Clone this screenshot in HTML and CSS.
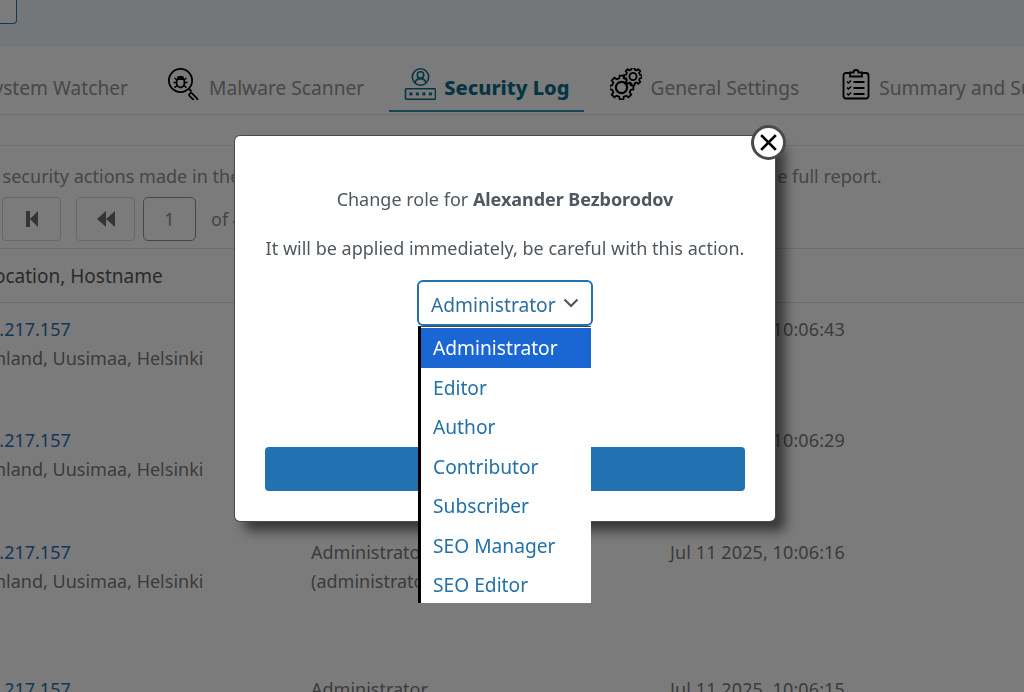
FILE: index.html
```html
<!DOCTYPE html>
<html lang="en">
<head>
<meta charset="utf-8">
<title>Security Log</title>
<link rel="stylesheet" href="styles.css">
</head>
<body>
<div class="page">
  <header class="topband"><span class="topbtn"></span></header>
  <nav class="tabs">
    <a class="tab tab-first"><span>System Watcher</span></a>
    <a class="tab"><svg class="ico" viewBox="0 0 32 32" fill="none" stroke="#000" stroke-width="1.800"><circle cx="12.500" cy="12.500" r="11.600"/><path d="M21 21l2.500 2.500" stroke-width="1.800"/><rect x="23" y="24.300" width="10" height="3.600" rx="1.800" transform="rotate(45 23 24.300)" stroke-width="1.700"/><ellipse cx="12.500" cy="14.500" rx="4" ry="5" stroke-width="1.800"/><path d="M9.500 11.300h6M9.500 8.500l1.200 1.800M15.500 8.500l-1.200 1.800M10.400 9.800a2.400 2.400 0 0 1 4.200 0M8.500 14.500H5.500M16.500 14.500h3M9 12l-2.500-2M16 12l2.500-2M9.200 17.500l-2.700 2.200M15.800 17.500l2.700 2.200" stroke-width="1.500"/></svg><span>Malware Scanner</span></a>
    <a class="tab tab-active"><svg class="ico" viewBox="0 0 32 32" fill="none" stroke="currentColor" stroke-width="1.600"><circle cx="16.500" cy="9" r="8.200"/><circle cx="16.500" cy="7" r="3.200"/><path d="M11 15c.6-3 2.700-4.400 5.500-4.400S21.400 12 22 15"/><rect x="1.500" y="20.800" width="30" height="10.400" rx="1"/><path d="M5.500 24.500l2.800 2.800m0-2.800l-2.800 2.800M12 24.500l2.800 2.800m0-2.800L12 27.300M18.500 24.500l2.800 2.800m0-2.800l-2.800 2.800M25 24.500l2.800 2.800m0-2.800L25 27.300" stroke-width="1.400"/></svg><span>Security Log</span></a>
    <a class="tab tab-gear"><svg class="ico" viewBox="0 0 32 32" fill="none" stroke="#000" stroke-width="1.800"><defs><polygon id="gear" vector-effect="non-scaling-stroke" points="9.22,-2.30 11.85,-1.88 11.85,1.88 9.22,2.30 8.15,4.89 9.71,7.05 7.05,9.71 4.89,8.15 2.30,9.22 1.88,11.85 -1.88,11.85 -2.30,9.22 -4.89,8.15 -7.05,9.71 -9.71,7.05 -8.15,4.89 -9.22,2.30 -11.85,1.88 -11.85,-1.88 -9.22,-2.30 -8.15,-4.89 -9.71,-7.05 -7.05,-9.71 -4.89,-8.15 -2.30,-9.22 -1.88,-11.85 1.88,-11.85 2.30,-9.22 4.89,-8.15 7.05,-9.71 9.71,-7.05 8.15,-4.89"/></defs><use href="#gear" transform="translate(11.500 19.500)"/><circle cx="11.500" cy="19.500" r="5.600" stroke-width="2.200"/><use class="gear-top" href="#gear" transform="translate(23 8.500) scale(.75)"/><circle cx="23" cy="8.500" r="3.600" stroke-width="1.900"/></svg><span>General Settings</span></a>
    <a class="tab tab-clip"><svg class="ico ico-clip" viewBox="0 0 28 32" fill="none" stroke="#000" stroke-width="1.800"><path d="M8 5H4a2.500 2.500 0 0 0-2.500 2.500V28A2.500 2.500 0 0 0 4 30.500h20a2.500 2.500 0 0 0 2.500-2.500V7.500A2.500 2.500 0 0 0 24 5h-4"/><path d="M8 8.500h12V4.500h-3.500a2.500 2.500 0 0 0-5 0H8z"/><path d="M5 13.500l1.500 1.500L9 12.500M5 19.500L6.500 21 9 18.500M5 25.500L6.500 27 9 24.500" stroke-width="1.500"/><path d="M11.500 14h11M11.500 20h11M11.500 26h11" stroke-width="2"/></svg><span>Summary and Support</span></a>
  </nav>
  <div class="subbar"></div>
  <p class="intro">All security actions made in the website are listed below. Use the filters to refine it, or export the full report.</p>
  <div class="pager">
    <button class="pg"><svg viewBox="0 0 16 16" class="pg-ico"><path d="M2 0h4v16H2zM14 0v16L6 8z"/></svg></button>
    <button class="pg"><svg viewBox="0 0 20 16" class="pg-ico pg-ico-w"><path d="M10 0v16L1 8zM19 0v16L10 8z"/></svg></button>
    <span class="pg-num">1</span>
    <span class="pg-of">of 4</span>
  </div>
  <div class="thead">
    <div class="c1">Location, Hostname</div>
    <div class="c2">User</div>
    <div class="c3">Date</div>
  </div>
  <div class="row">
    <div class="c1"><a class="ip">65.109.217.157</a><br>Finland, Uusimaa, Helsinki</div>
    <div class="c2">Administrator<br>(administrator)</div>
    <div class="c3">Jul 11 2025, 10:06:43</div>
  </div>
  <div class="row">
    <div class="c1"><a class="ip">65.109.217.157</a><br>Finland, Uusimaa, Helsinki</div>
    <div class="c2">Administrator<br>(administrator)</div>
    <div class="c3">Jul 11 2025, 10:06:29</div>
  </div>
  <div class="row row-tall">
    <div class="c1"><a class="ip">65.109.217.157</a><br>Finland, Uusimaa, Helsinki</div>
    <div class="c2">Administrator<br>(administrator)</div>
    <div class="c3">Jul 11 2025, 10:06:16</div>
  </div>
  <div class="row">
    <div class="c1"><a class="ip">65.109.217.157</a><br>Finland, Uusimaa, Helsinki</div>
    <div class="c2">Administrator<br>(administrator)</div>
    <div class="c3">Jul 11 2025, 10:06:15</div>
  </div>
</div>
<div class="overlay"></div>
<div class="modal">
  <p class="m-line m-first">Change role for <b>Alexander Bezborodov</b></p>
  <p class="m-line">It will be applied immediately, be careful with this action.</p>
  <div class="select">Administrator<svg class="chev" viewBox="0 0 16 10" fill="none" stroke="#50575e" stroke-width="2.200"><path d="M1.500 1.500L8 8l6.500-6.500"/></svg></div>
  <div class="m-btn"></div>
</div>
<ul class="listbox">
  <li class="sel">Administrator</li>
  <li>Editor</li>
  <li>Author</li>
  <li>Contributor</li>
  <li>Subscriber</li>
  <li>SEO Manager</li>
  <li>SEO Editor</li>
</ul>
<button class="close"><svg viewBox="0 0 20 20" fill="none" stroke="#000" stroke-width="2.600"><path d="M3 3l14 14M17 3L3 17"/></svg></button>
</body>
</html>
```
FILE: styles.css
```css
* { box-sizing: border-box; }
html, body { margin: 0; height: 100%; overflow: hidden; }
body { font-family: "Noto Sans", "Open Sans", sans-serif; font-size: 18px; color: #777; background: #f6f6f6; }
.page { width: 1024px; height: 692px; overflow: hidden; }
.topband { height: 46px; background: #e6eef4; }
.topbtn { display: block; width: 17px; height: 24px; background: #f6f7f7; border: 1px solid #2271b1; border-top: 0; border-left: 0; border-radius: 0 0 4px 0; }
.tabs { height: 69px; display: flex; gap: 10px; border-bottom: 1px solid #e0e0e0; }
.tab { display: flex; align-items: flex-start; gap: 9px; height: 66px; padding: 22px 15px 0; color: #909090; white-space: nowrap; font-size: 19.200px; }
.tab span { margin-top: 4px; line-height: 32px; }
.tab-first { width: 143px; justify-content: flex-end; padding-left: 0; overflow: hidden; flex: none; }
.tab-active { gap: 8px; color: #0b6a84; font-weight: 800; font-size: 20px; border-bottom: 2px solid #2a8aa6; }
.tab-gear { gap: 8px; margin-left: 1px; }
.tab-clip { margin-left: 3px; }
.ico { width: 32px; height: 32px; flex: none; }
.ico-clip { width: 28px; }
.gear-top { fill: #f6f6f6; }
.subbar { height: 31px; border-bottom: 1px solid #e0e0e0; }
.intro { margin: 18px 0 0 -23px; width: 1200px; font-size: 18px; letter-spacing: .02px; line-height: 24px; white-space: nowrap; color: #8c8c8c; }
.pager { display: flex; align-items: center; margin: 9px 0 0 2px; height: 44px; }
.pg { width: 59px; height: 44px; border: 1px solid #d0d0d0; border-radius: 4px; background: #f6f6f6; margin-right: 15px; display: flex; align-items: center; justify-content: center; padding: 0; }
.pg-ico { width: 16px; height: 16px; fill: #6a6a6a; }
.pg-ico-w { width: 20px; }
.pg-num { width: 53px; height: 44px; border: 1px solid #8c8f94; border-radius: 5px; display: flex; align-items: center; justify-content: center; font-size: 18px; color: #888; margin-left: -7px; }
.pg-of { margin-left: 15px; color: #888; }
.thead, .row { display: grid; grid-template-columns: 311px 359px 1fr; }
.thead { height: 55px; margin-top: 7px; border-top: 1px solid #d8d8d8; border-bottom: 1px solid #d8d8d8; align-items: center; color: #555; font-size: 19px; }
.thead .c1 { margin-left: -16px; }
.row .c1 { margin-left: -19px; }
.row { height: 111.500px; padding-top: 11.600px; line-height: 29px; white-space: nowrap; }
.row-tall { height: 137px; }
.ip { color: #2271b1; margin-left: -38px; }
.c3 { letter-spacing: .1px; }
.overlay { position: fixed; inset: 0; background: rgba(0, 0, 0, .5); }
.modal { position: absolute; left: 235px; top: 136px; width: 540px; height: 385px; background: #fff; border-radius: 5px; box-shadow: 0 0 0 1px #4a4a4a, 10px 10px 12px rgba(0,0,0,.55); text-align: center; padding: 0 30px; color: #50575e; font-size: 18px; }
.m-line { margin: 0; line-height: 26px; }
.m-line b { letter-spacing: -.05px; }
.m-first { margin-top: 50px; margin-bottom: 23px; }
.select { display: flex; align-items: center; justify-content: space-between; width: 176px; height: 46px; margin: 19px auto 0; padding: 2px 12px 0; border: 2px solid #2271b1; border-radius: 6px; color: #2c6e9e; font-size: 19.200px; }
.chev { width: 16px; height: 10px; margin-top: -2px; }
.m-btn { height: 44px; margin-top: 121px; background: #2271b1; border-radius: 4px; }
.listbox { position: absolute; left: 418px; top: 326px; width: 173px; height: 277px; margin: 0; padding: 1px 0 0; list-style: none; background: #fff; border-left: 3px solid #000; border-top: 1px solid #444; color: #2271a8; font-size: 19.200px; overflow: hidden; }
.listbox li { height: 39.500px; line-height: 40px; padding: 0 0 0 12px; }
.listbox .sel { background: #1a66d2; color: #fff; }
.close { position: absolute; left: 751px; top: 125px; width: 35px; height: 35px; border-radius: 50%; background: #fff; border: 3px solid #4a4a4a; padding: 4px; display: flex; }
.close svg { width: 100%; height: 100%; }
```
